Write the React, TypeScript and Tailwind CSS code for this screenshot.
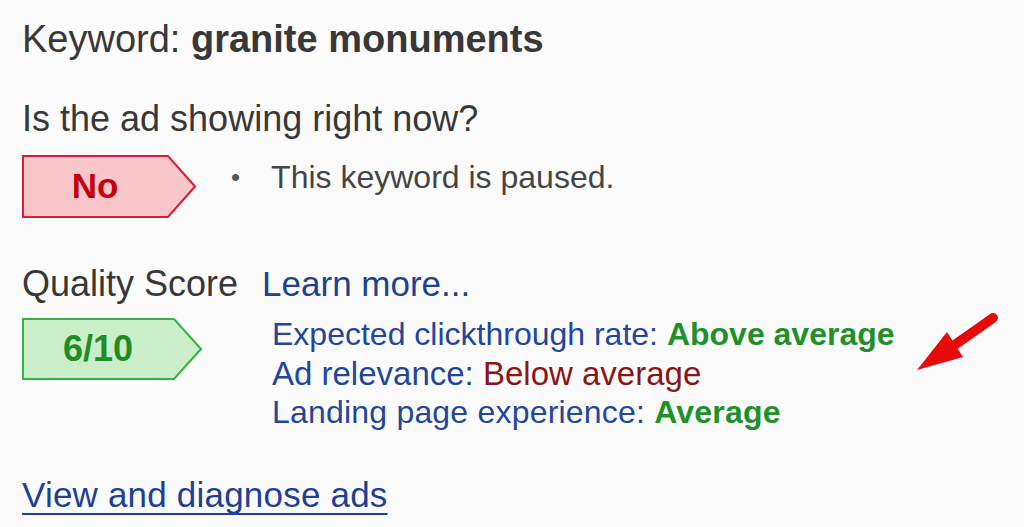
import React from 'react';

type TagProps = {
  label: string;
  width: number;
  height: number;
  body: number;
  fill: string;
  stroke: string;
  textClass: string;
};

// Pentagon-shaped status tag: a flat box with a pointed right side
const Tag: React.FC<TagProps> = ({ label, width, height, body, fill, stroke, textClass }) => {
  const mid = height / 2;
  const points = `1,1 ${body},1 ${width - 1},${mid} ${body},${height - 1} 1,${height - 1}`;
  return (
    <div className="relative shrink-0" style={{ width, height }}>
      <svg className="absolute inset-0" width={width} height={height} viewBox={`0 0 ${width} ${height}`}>
        <polygon points={points} fill={fill} stroke={stroke} strokeWidth={2} strokeLinejoin="miter" />
      </svg>
      <div
        className={`relative flex h-full items-center justify-center font-bold ${textClass}`}
        style={{ width: body }}
      >
        {label}
      </div>
    </div>
  );
};

const App: React.FC = () => {
  return (
    <div className="relative h-[527px] w-[1024px] overflow-hidden bg-[#fbfbfb] font-['Liberation_Sans',Arial,sans-serif]">
      <div className="flex flex-col px-[22px] pt-[17px]">
        {/* Keyword */}
        <h1 className="text-[38px] leading-[44px] text-[#383838]">
          Keyword: <span className="font-bold">granite monuments</span>
        </h1>

        {/* Serving status */}
        <p className="mt-[37px] text-[36px] leading-[42px] text-[#383838]">Is the ad showing right now?</p>
        <div className="mt-[15px] flex items-start">
          <Tag
            label="No"
            width={174}
            height={63}
            body={146}
            fill="#f9c7c9"
            stroke="#d31f2f"
            textClass="text-[35px] text-[#c4000e]"
          />
          <ul className="ml-[35px] mt-[3px] text-[32px] leading-[38px] text-[#454545]">
            <li className="flex items-center">
              <span className="mr-[31px] text-[26px] text-[#555]">•</span>
              This keyword is paused.
            </li>
          </ul>
        </div>

        {/* Quality Score */}
        <div className="mt-[45px] flex items-baseline text-[36px] leading-[42px]">
          <span className="text-[#383838]">Quality Score</span>
          <a href="#" className="ml-[24px] text-[35px] text-[#1d3f95]">
            Learn more...
          </a>
        </div>
        <div className="mt-[13px] flex items-start">
          <Tag
            label="6/10"
            width={180}
            height={62}
            body={152}
            fill="#c9eec9"
            stroke="#35b240"
            textClass="text-[36px] text-[#1f8c25]"
          />
          <div className="ml-[70px] mt-[-3px] flex flex-col text-[32px] leading-[39px] text-[#24459c]">
            <span>
              Expected clickthrough rate: <span className="font-bold text-[#20912a]">Above average</span>
            </span>
            <span className="text-[33px]">
              Ad relevance: <span className="text-[#8a1616]">Below average</span>
            </span>
            <span className="tracking-[0.2px]">
              Landing page experience: <span className="font-bold text-[#20912a]">Average</span>
            </span>
          </div>
        </div>

        {/* Ads link */}
        <a
          href="#"
          className="mt-[42px] self-start text-[35px] leading-[42px] tracking-[0.2px] text-[#1d3f95] underline decoration-2 underline-offset-[6px] [text-decoration-skip-ink:none]"
        >
          View and diagnose ads
        </a>
      </div>

      {/* Red pointer arrow */}
      <svg className="absolute left-[908px] top-[308px]" width={100} height={72} viewBox="0 0 100 72">
        <line x1={85} y1={10} x2={48} y2={36} stroke="#e60a0a" strokeWidth={10} strokeLinecap="round" />
        <polygon points="9,62 39,24 55,49" fill="#e60a0a" />
      </svg>
    </div>
  );
};

export default App;
